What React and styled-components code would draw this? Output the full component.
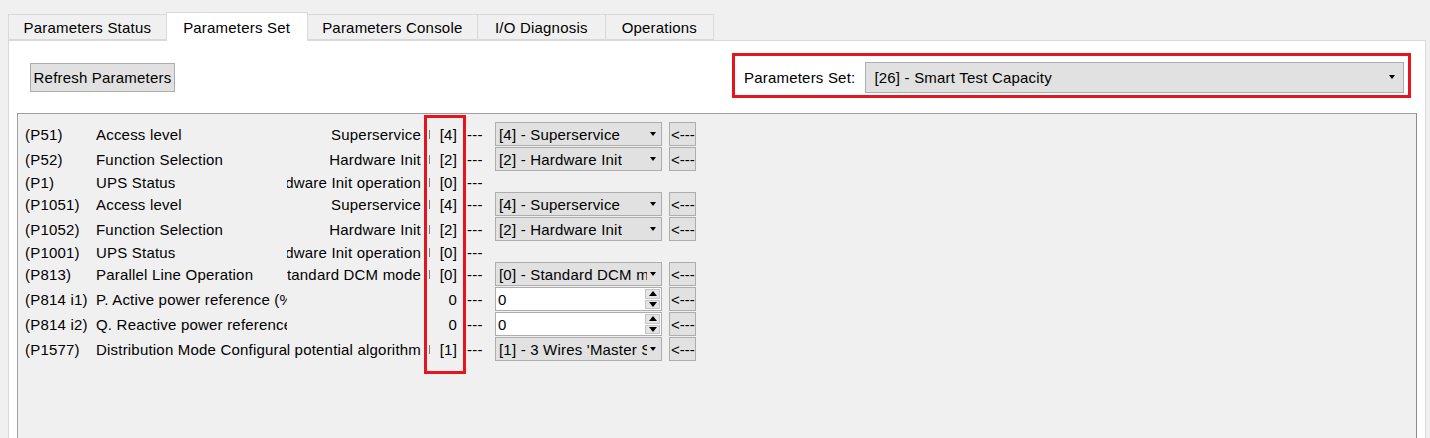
import React from 'react';
import styled, { createGlobalStyle } from 'styled-components';

const GlobalStyle = createGlobalStyle`
  html, body {
    margin: 0;
    padding: 0;
    background: #f0f0f0;
  }
  body {
    font-family: "Liberation Sans", Arial, sans-serif;
    font-size: 15px;
    letter-spacing: 0.2px;
    color: #000;
  }
`;

const Window = styled.div`
  width: 1430px;
  height: 438px;
  overflow: hidden;
  padding: 12px 4px 0 8px;
  box-sizing: border-box;
`;

const TabBar = styled.div`
  display: flex;
  align-items: flex-end;
  height: 28px;
  position: relative;
  z-index: 1;
`;

const Tab = styled.div`
  box-sizing: border-box;
  height: ${p => (p.$active ? 29 : 26)}px;
  margin-bottom: ${p => (p.$active ? -1 : 0)}px;
  margin-left: -1px;
  padding: 0 ${p => p.$pad}px;
  display: flex;
  align-items: center;
  white-space: nowrap;
  background: ${p => (p.$active ? '#ffffff' : '#f0f0f0')};
  border: 1px solid #d9d9d9;
  border-bottom: ${p => (p.$active ? 'none' : '1px solid #d9d9d9')};
  &:first-child {
    margin-left: 0;
  }
`;

const Pane = styled.div`
  background: #fff;
  border: 1px solid #d9d9d9;
  height: 420px;
  box-sizing: border-box;
`;

const TopRow = styled.div`
  display: flex;
  justify-content: space-between;
  align-items: flex-start;
  padding: 12px 14px 0 21px;
`;

const RefreshButton = styled.div`
  margin-top: 10px;
  width: 145px;
  height: 29px;
  box-sizing: border-box;
  display: flex;
  align-items: center;
  justify-content: center;
  background: #e1e1e1;
  border: 1px solid #adadad;
  white-space: nowrap;
`;

const SetBox = styled.div`
  width: 679px;
  height: 45px;
  box-sizing: border-box;
  border: 3px solid #e5141d;
  display: flex;
  align-items: center;
  padding: 3px 4px 0 9px;
  gap: 10px;
`;

const SetLabel = styled.span`
  white-space: nowrap;
`;

const Combo = styled.div`
  position: relative;
  box-sizing: border-box;
  width: ${p => p.$width || '167px'};
  flex: ${p => (p.$grow ? 1 : 'none')};
  height: ${p => p.$height || 24}px;
  background: #e1e1e1;
  border: 1px solid #adadad;
  padding: 0 14px 0 ${p => p.$padLeft || 3}px;
  display: flex;
  align-items: center;
  overflow: hidden;
  white-space: nowrap;
  &::after {
    content: '';
    position: absolute;
    right: ${p => p.$arrowRight || 5}px;
    top: 50%;
    margin-top: -2px;
    border-left: 3.5px solid transparent;
    border-right: 3.5px solid transparent;
    border-top: 4px solid #000;
  }
`;

const ComboText = styled.span`
  overflow: hidden;
`;

const GroupBox = styled.div`
  position: relative;
  margin: 15px 8px 0 8px;
  height: 340px;
  background: #f0f0f0;
  border: 1px solid #a0a0a0;
  border-right-color: #8c8c8c;
  padding: 8px 0 0 7px;
`;

const Row = styled.div`
  display: flex;
  align-items: center;
  height: ${p => (p.$tall ? 25 : 20)}px;
  padding-bottom: ${p => (p.$tall ? 1 : 0)}px;
  box-sizing: border-box;
  white-space: nowrap;
`;

const Code = styled.div`
  width: 71px;
  flex: none;
`;

const Name = styled.div`
  width: 191px;
  flex: none;
  overflow: hidden;
`;

const Desc = styled.div`
  width: 134px;
  flex: none;
  display: flex;
  justify-content: flex-end;
  overflow: hidden;
  span {
    flex: none;
  }
`;

const Tick = styled.div`
  width: 1px;
  height: 9px;
  background: #7a7a7a;
  margin: 0 5px 0 8px;
  visibility: ${p => (p.$hidden ? 'hidden' : 'visible')};
`;

const Value = styled.div`
  width: 22px;
  flex: none;
  text-align: right;
`;

const Dashes = styled.div`
  width: 28px;
  margin-left: 10px;
  flex: none;
`;

const Spin = styled.div`
  position: relative;
  box-sizing: border-box;
  width: 167px;
  height: 24px;
  background: #fff;
  border: 1px solid #adadad;
  padding-left: 2px;
  display: flex;
  align-items: center;
`;

const SpinButtons = styled.div`
  position: absolute;
  right: 1px;
  top: 1px;
  bottom: 1px;
  width: 15px;
  display: flex;
  flex-direction: column;
  gap: 1px;
`;

const SpinButton = styled.div`
  flex: 1;
  background: #e5e5e5;
  border: 1px solid #c4c4c4;
  display: flex;
  align-items: center;
  justify-content: center;
  &::after {
    content: '';
    border-left: 4px solid transparent;
    border-right: 4px solid transparent;
    ${p => (p.$up ? 'border-bottom: 5px solid #000;' : 'border-top: 5px solid #000;')}
  }
`;

const ApplyButton = styled.div`
  margin-left: 7px;
  width: 27px;
  height: 24px;
  box-sizing: border-box;
  background: #e1e1e1;
  border: 1px solid #adadad;
  padding-left: 1px;
  display: flex;
  align-items: center;
  overflow: hidden;
  letter-spacing: 0;
`;

const Marker = styled.div`
  position: absolute;
  left: 406px;
  top: 1px;
  width: 42px;
  height: 259px;
  box-sizing: border-box;
  border: 3px solid #e5141d;
  pointer-events: none;
`;

const tabs = [
  { label: 'Parameters Status', pad: 14.5 },
  { label: 'Parameters Set', pad: 16.5, active: true },
  { label: 'Parameters Console', pad: 14.5 },
  { label: 'I/O Diagnosis', pad: 17 },
  { label: 'Operations', pad: 16 },
];

const rows = [
  { code: '(P51)', name: 'Access level', desc: 'Superservice', val: '[4]', combo: '[4] - Superservice' },
  { code: '(P52)', name: 'Function Selection', desc: 'Hardware Init', val: '[2]', combo: '[2] - Hardware Init' },
  { code: '(P1)', name: 'UPS Status', desc: 'Hardware Init operation', val: '[0]' },
  { code: '(P1051)', name: 'Access level', desc: 'Superservice', val: '[4]', combo: '[4] - Superservice' },
  { code: '(P1052)', name: 'Function Selection', desc: 'Hardware Init', val: '[2]', combo: '[2] - Hardware Init' },
  { code: '(P1001)', name: 'UPS Status', desc: 'Hardware Init operation', val: '[0]' },
  { code: '(P813)', name: 'Parallel Line Operation', desc: 'Standard DCM mode', val: '[0]', combo: '[0] - Standard DCM mode' },
  { code: '(P814 i1)', name: 'P. Active power reference (%)', desc: '', val: '0', spin: '0' },
  { code: '(P814 i2)', name: 'Q. Reactive power reference (%)', desc: '', val: '0', spin: '0' },
  { code: '(P1577)', name: 'Distribution Mode Configuration', desc: 'Equal potential algorithm', val: '[1]', combo: "[1] - 3 Wires 'Master Slave'" },
];

const ParamRow = ({ row }) => {
  const tall = !!(row.combo || row.spin);
  return (
    <Row $tall={tall}>
      <Code>{row.code}</Code>
      <Name>{row.name}</Name>
      <Desc><span>{row.desc}</span></Desc>
      <Tick $hidden={!row.desc} />
      <Value>{row.val}</Value>
      <Dashes>---</Dashes>
      {row.combo && (
        <Combo><ComboText>{row.combo}</ComboText></Combo>
      )}
      {row.spin && (
        <Spin>
          {row.spin}
          <SpinButtons>
            <SpinButton $up />
            <SpinButton />
          </SpinButtons>
        </Spin>
      )}
      {tall && <ApplyButton>&lt;---</ApplyButton>}
    </Row>
  );
};

export default function App() {
  return (
    <Window>
      <GlobalStyle />
      <TabBar>
        {tabs.map(t => (
          <Tab key={t.label} $active={t.active} $pad={t.pad}>{t.label}</Tab>
        ))}
      </TabBar>
      <Pane>
        <TopRow>
          <RefreshButton>Refresh Parameters</RefreshButton>
          <SetBox>
            <SetLabel>Parameters Set:</SetLabel>
            <Combo $grow $width="auto" $height={31} $padLeft={8} $arrowRight={8}>
              <ComboText>[26] - Smart Test Capacity</ComboText>
            </Combo>
          </SetBox>
        </TopRow>
        <GroupBox>
          {rows.map((r, i) => (
            <ParamRow key={i} row={r} />
          ))}
          <Marker />
        </GroupBox>
      </Pane>
    </Window>
  );
}
